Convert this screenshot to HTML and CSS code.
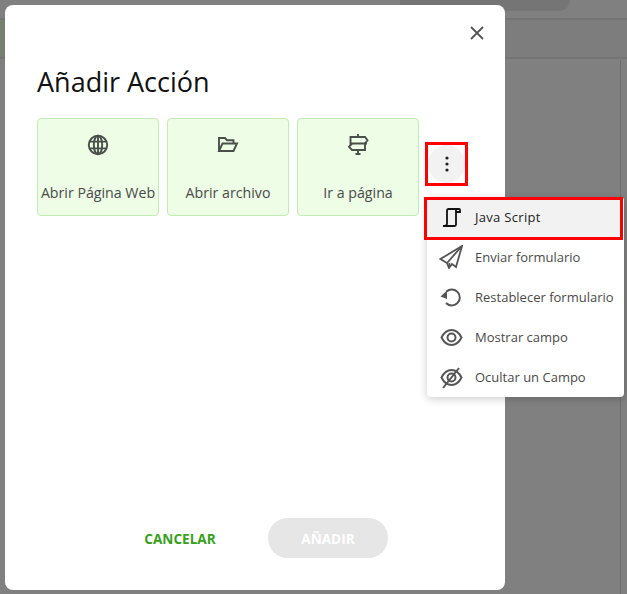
FILE: index.html
```html
<!DOCTYPE html>
<html lang="es">
<head>
    <meta charset="utf-8">
    <title>Añadir Acción</title>
    <link rel="stylesheet" href="styles.css">
</head>
<body>
    <!-- pagina de fondo, tapada por el overlay -->
    <div class="backdrop">
        <div class="backdrop-tab"></div>
        <div class="backdrop-toolbar"></div>
        <div class="backdrop-side"></div>
    </div>

    <div class="dialog">
        <button class="close-btn" type="button" aria-label="Cerrar">
            <svg width="16" height="16" viewBox="0 0 16 16"><path d="M2 2l12 12M14 2L2 14"/></svg>
        </button>
        <h1 class="dialog-title">Añadir Acción</h1>

        <div class="action-row">
            <div class="action-card">
                <svg class="action-icon" width="24" height="24" viewBox="0 0 24 24">
                    <circle cx="12" cy="12" r="9.2"/>
                    <ellipse cx="12" cy="12" rx="4.2" ry="9.2"/>
                    <path d="M12 2.8v18.4M3.6 8.6h16.8M3.6 15.4h16.8"/>
                </svg>
                <span class="action-label">Abrir Página Web</span>
            </div>
            <div class="action-card">
                <svg class="action-icon" width="24" height="24" viewBox="0 0 24 24">
                    <path d="M3 18V5h6l2 2.2h6.5v3.3"/>
                    <path d="M3 18h14.5L21 10.5H6.5z"/>
                </svg>
                <span class="action-label">Abrir archivo</span>
            </div>
            <div class="action-card">
                <svg class="action-icon" width="24" height="24" viewBox="0 0 24 24">
                    <path d="M12 1v3M12 17v4M9.5 21h5"/>
                    <path d="M4.5 4v6.5H19l2.500-3.200L19 4z"/>
                    <path d="M21 10.500h-2V17H6l-3-3.200 3-3.300"/>
                </svg>
                <span class="action-label">Ir a página</span>
            </div>
            <button class="more-btn" type="button" aria-label="Más">
                <span class="more-circle">
                    <svg width="4" height="16" viewBox="0 0 4 16"><circle cx="2" cy="2" r="1.6"/><circle cx="2" cy="8" r="1.6"/><circle cx="2" cy="14" r="1.6"/></svg>
                </span>
            </button>
        </div>

        <div class="dialog-footer">
            <button class="btn-cancel" type="button">CANCELAR</button>
            <button class="btn-add" type="button" disabled>AÑADIR</button>
        </div>
    </div>

    <ul class="action-menu">
        <li class="menu-item selected">
            <svg class="menu-icon dark" width="24" height="24" viewBox="0 0 24 24">
                <path d="M4 21h11.500a1.500 1.500 0 0 0 1.500-1.500V4"/>
                <path d="M4 21c2.800 0 4-.6 4-2.500V5.500A1.500 1.500 0 0 1 9.500 4H20a1 1 0 0 1 1 1v2h-4"/>
            </svg>
            <span>Java Script</span>
        </li>
        <li class="menu-item">
            <svg class="menu-icon" width="24" height="24" viewBox="0 0 24 24">
                <path d="M23 1L1.5 14 8 18l2 5 3-4 4 3z"/>
                <path d="M23 1L8 18M10 23l.5-5"/>
            </svg>
            <span>Enviar formulario</span>
        </li>
        <li class="menu-item">
            <svg class="menu-icon thick" width="24" height="24" viewBox="0 0 24 24">
                <path d="M7.5 6.5A8 8 0 1 1 7 18"/>
                <path class="solid" d="M1.5 11.5L8 5.5V14z"/>
            </svg>
            <span>Restablecer formulario</span>
        </li>
        <li class="menu-item">
            <svg class="menu-icon thick" width="24" height="24" viewBox="0 0 24 24">
                <path d="M2.5 12.5C5 7.5 8.500 5 12.500 5s7.500 2.500 10 7.500c-2.500 5-6 7.500-10 7.500s-7.500-2.500-10-7.500z"/>
                <circle cx="12.5" cy="12.5" r="4"/>
            </svg>
            <span>Mostrar campo</span>
        </li>
        <li class="menu-item">
            <svg class="menu-icon thick" width="24" height="24" viewBox="0 0 24 24">
                <path d="M2.5 12.5C5 7.500 8.500 5 12.500 5s7.500 2.500 10 7.500c-2.500 5-6 7.500-10 7.500s-7.500-2.500-10-7.500z"/>
                <circle cx="12.5" cy="12.5" r="4"/>
                <path d="M20 3L4 23"/>
            </svg>
            <span>Ocultar un Campo</span>
        </li>
    </ul>
</body>
</html>
```

FILE: styles.css
```css
html, body {
    height: 100%;
}
body {
    margin: 0;
    padding: 5px;
    box-sizing: border-box;
    overflow: hidden;
    background-color: #808080;
    font-family: "Open Sans", "Noto Sans", sans-serif;
    color: #4a4a4a;
}

/* fondo */
.backdrop {
    position: absolute;
    inset: 0;
}
.backdrop-tab {
    position: absolute;
    top: 0;
    left: 400px;
    width: 170px;
    height: 11px;
    background-color: #757575;
    border-bottom-right-radius: 12px;
}
.backdrop-toolbar {
    position: absolute;
    top: 18px;
    left: 0;
    right: 0;
    height: 41px;
    background-color: #7d7d7d;
    border-top: 2px solid #747474;
    border-bottom: 2px solid #747474;
    box-sizing: border-box;
}
.backdrop-toolbar::before {
    content: "";
    display: block;
    width: 5px;
    height: 100%;
    background-color: #76806f;
}
.backdrop-side {
    position: absolute;
    top: 60px;
    bottom: 0;
    left: 620px;
    width: 1px;
    background-color: #6e6e6e;
}

/* dialogo */
.dialog {
    position: relative;
    width: 500px;
    height: 585px;
    box-sizing: border-box;
    padding: 59px 32px 32px;
    background-color: white;
    border-radius: 8px;
    display: flex;
    flex-direction: column;
}
.close-btn {
    position: absolute;
    top: 20px;
    right: 20px;
    width: 16px;
    height: 16px;
    padding: 0;
    border: none;
    background: none;
}
.close-btn svg {
    display: block;
    fill: none;
    stroke: #555555;
    stroke-width: 1.8;
}
.dialog-title {
    margin: 0 0 19px;
    font-size: 27px;
    font-weight: 400;
    line-height: 35px;
    color: #111111;
}
.action-row {
    display: flex;
    gap: 8px;
    align-items: center;
}
.action-card {
    width: 122px;
    height: 98px;
    box-sizing: border-box;
    padding-top: 14px;
    background-color: #edfde6;
    border: 1px solid #c3ecb5;
    border-radius: 4px;
    display: flex;
    flex-direction: column;
    align-items: center;
}
.action-icon {
    fill: none;
    stroke: #4a4f4a;
    stroke-width: 1.9;
}
.action-label {
    margin-top: 26px;
    font-size: 14.2px;
    line-height: 20px;
    white-space: nowrap;
}
.more-btn {
    width: 43px;
    height: 44px;
    padding: 0;
    box-sizing: border-box;
    margin: 0 0 6px -2px;
    border: 3px solid #ff0000;
    background: none;
    display: flex;
    align-items: center;
    justify-content: center;
}
.more-circle {
    width: 38px;
    height: 38px;
    border-radius: 50%;
    background-color: #f2f2f2;
    display: flex;
    align-items: center;
    justify-content: center;
}
.more-circle svg {
    fill: #222222;
}
.dialog-footer {
    margin-top: auto;
    padding-left: 22px;
    display: flex;
    justify-content: center;
    align-items: center;
    gap: 52px;
}
.btn-cancel {
    width: 72px;
    padding: 0;
    border: none;
    background: none;
    font-family: inherit;
    font-size: 13.6px;
    font-weight: 700;
    color: #38a01c;
}
.btn-add {
    width: 120px;
    height: 40px;
    border: none;
    border-radius: 20px;
    background-color: #e6e6e6;
    font-family: inherit;
    font-size: 13.6px;
    font-weight: 700;
    color: white;
}

/* menu desplegable */
.action-menu {
    position: absolute;
    top: 197px;
    left: 427px;
    width: 197px;
    margin: 0;
    padding: 0;
    list-style: none;
    background-color: white;
    border-radius: 4px;
    box-shadow: 0 2px 8px rgba(0, 0, 0, 0.2);
}
.menu-item {
    height: 40px;
    box-sizing: border-box;
    padding-left: 12px;
    display: flex;
    align-items: center;
    gap: 12px;
    font-size: 13px;
    white-space: nowrap;
}
.menu-item.selected {
    width: 199px;
    height: 43px;
    margin: 0 0 -3px -3px;
    padding-bottom: 4px;
    border: 3px solid #ff0000;
    background-color: #f2f2f2;
    color: #222222;
    letter-spacing: 0.3px;
}
.menu-icon {
    flex: none;
    fill: none;
    stroke: #555555;
    stroke-width: 1.8;
}
.menu-icon.thick {
    stroke-width: 2;
}
.menu-icon.dark {
    stroke: #111111;
}
.menu-icon .solid {
    fill: #555555;
    stroke: none;
}
```
